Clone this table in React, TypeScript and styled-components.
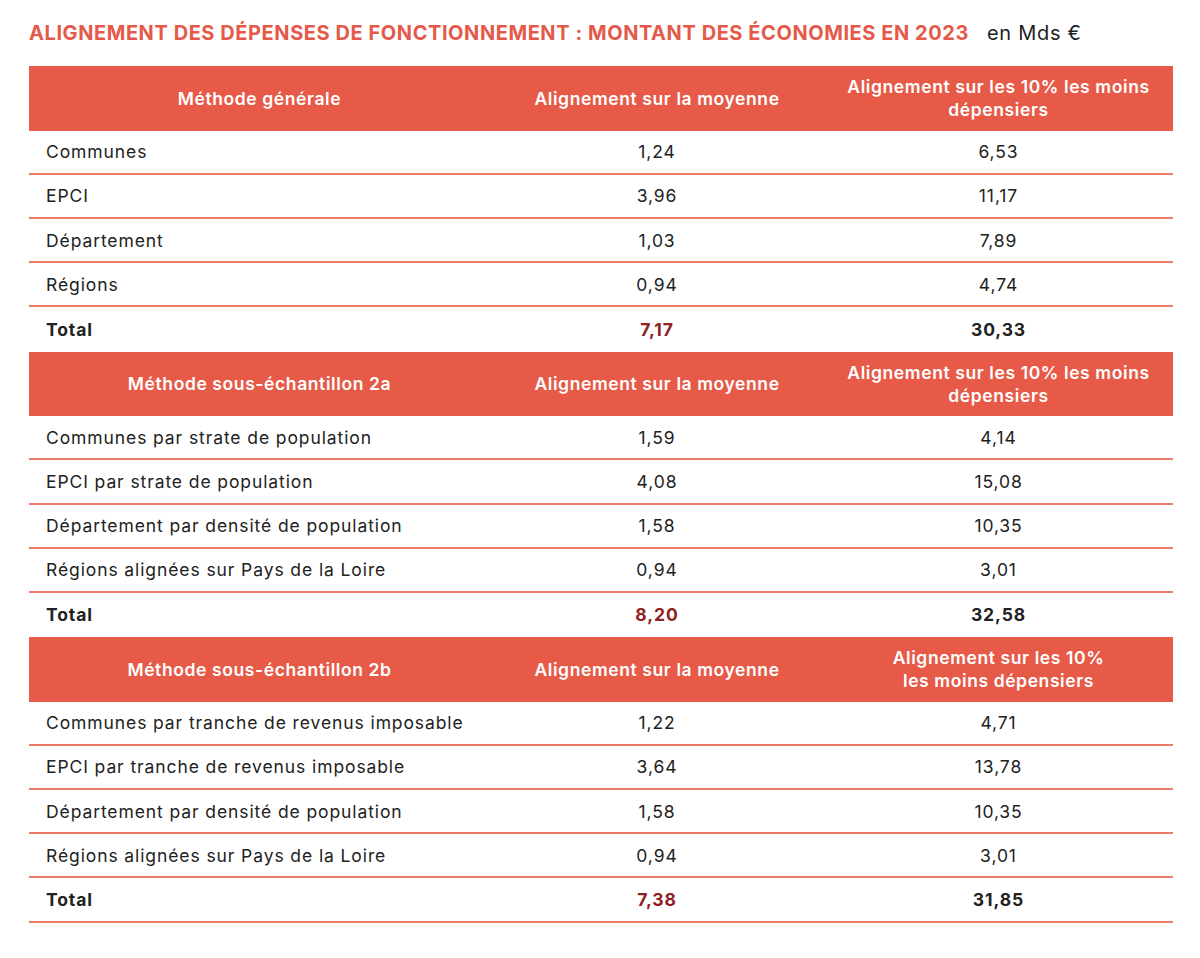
import React from "react";
import styled, { createGlobalStyle } from "styled-components";

const Global = createGlobalStyle`
  html, body { margin: 0; padding: 0; background: #ffffff; }
  body { font-family: "Inter", "Liberation Sans", sans-serif; color: #222222; }
`;

const Page = styled.div`
  width: 1200px;
  height: 958px;
  box-sizing: border-box;
  padding: 21px 27px 0 29px;
`;

const TitleRow = styled.div`
  display: flex;
  align-items: baseline;
  gap: 18px;
  height: 45px;
`;

const Title = styled.h1`
  margin: 0;
  font-size: 20px;
  font-weight: 700;
  color: #e5594a;
  letter-spacing: 0.57px;
`;

const Unit = styled.span`
  font-size: 20px;
  color: #1e1e1e;
  letter-spacing: 0.7px;
`;

const Grid = styled.div`
  display: grid;
  grid-template-columns: 461px 334px 349px;
`;

const HeadCell = styled.div`
  background: #e65a47;
  color: #ffffff;
  height: 64.6px;
  display: flex;
  align-items: center;
  justify-content: center;
  text-align: center;
  font-size: 17.5px;
  font-weight: 600;
  letter-spacing: 0.6px;
  line-height: 23px;
  padding: 0 16px;
  box-sizing: border-box;
`;

const Cell = styled.div<{ $label?: boolean; $total?: boolean; $accent?: boolean; $last?: boolean }>`
  height: 44.2px;
  box-sizing: border-box;
  display: flex;
  align-items: center;
  justify-content: ${(p) => (p.$label ? "flex-start" : "center")};
  padding-left: ${(p) => (p.$label ? "17px" : "0")};
  font-size: 17.5px;
  letter-spacing: 0.9px;
  font-weight: ${(p) => (p.$total ? 700 : 400)};
  color: ${(p) => (p.$accent ? "#8e2222" : "#222222")};
  border-bottom: ${(p) => (p.$total && !p.$last ? "none" : "2px solid #ee7a69")};
`;

type Section = {
  head: [string, string, React.ReactNode];
  rows: [string, string, string][];
  total: [string, string];
};

const sections: Section[] = [
  {
    head: ["Méthode générale", "Alignement sur la moyenne", "Alignement sur les 10% les moins dépensiers"],
    rows: [
      ["Communes", "1,24", "6,53"],
      ["EPCI", "3,96", "11,17"],
      ["Département", "1,03", "7,89"],
      ["Régions", "0,94", "4,74"],
    ],
    total: ["7,17", "30,33"],
  },
  {
    head: ["Méthode sous-échantillon 2a", "Alignement sur la moyenne", "Alignement sur les 10% les moins dépensiers"],
    rows: [
      ["Communes par strate de population", "1,59", "4,14"],
      ["EPCI par strate de population", "4,08", "15,08"],
      ["Département par densité de population", "1,58", "10,35"],
      ["Régions alignées sur Pays de la Loire", "0,94", "3,01"],
    ],
    total: ["8,20", "32,58"],
  },
  {
    head: [
      "Méthode sous-échantillon 2b",
      "Alignement sur la moyenne",
      <>
        Alignement sur les 10%
        <br />
        les moins dépensiers
      </>,
    ],
    rows: [
      ["Communes par tranche de revenus imposable", "1,22", "4,71"],
      ["EPCI par tranche de revenus imposable", "3,64", "13,78"],
      ["Département par densité de population", "1,58", "10,35"],
      ["Régions alignées sur Pays de la Loire", "0,94", "3,01"],
    ],
    total: ["7,38", "31,85"],
  },
];

export default function App() {
  return (
    <>
      <Global />
      <Page>
        <TitleRow>
          <Title>ALIGNEMENT DES DÉPENSES DE FONCTIONNEMENT : MONTANT DES ÉCONOMIES EN 2023</Title>
          <Unit>en Mds €</Unit>
        </TitleRow>
        <Grid>
          {sections.map((s, si) => {
            const last = si === sections.length - 1;
            return (
              <React.Fragment key={si}>
                <HeadCell>{s.head[0]}</HeadCell>
                <HeadCell>{s.head[1]}</HeadCell>
                <HeadCell>{s.head[2]}</HeadCell>
                {s.rows.map((r, ri) => (
                  <React.Fragment key={ri}>
                    <Cell $label>{r[0]}</Cell>
                    <Cell>{r[1]}</Cell>
                    <Cell>{r[2]}</Cell>
                  </React.Fragment>
                ))}
                <Cell $label $total $last={last}>Total</Cell>
                <Cell $total $accent $last={last}>{s.total[0]}</Cell>
                <Cell $total $last={last}>{s.total[1]}</Cell>
              </React.Fragment>
            );
          })}
        </Grid>
      </Page>
    </>
  );
}
